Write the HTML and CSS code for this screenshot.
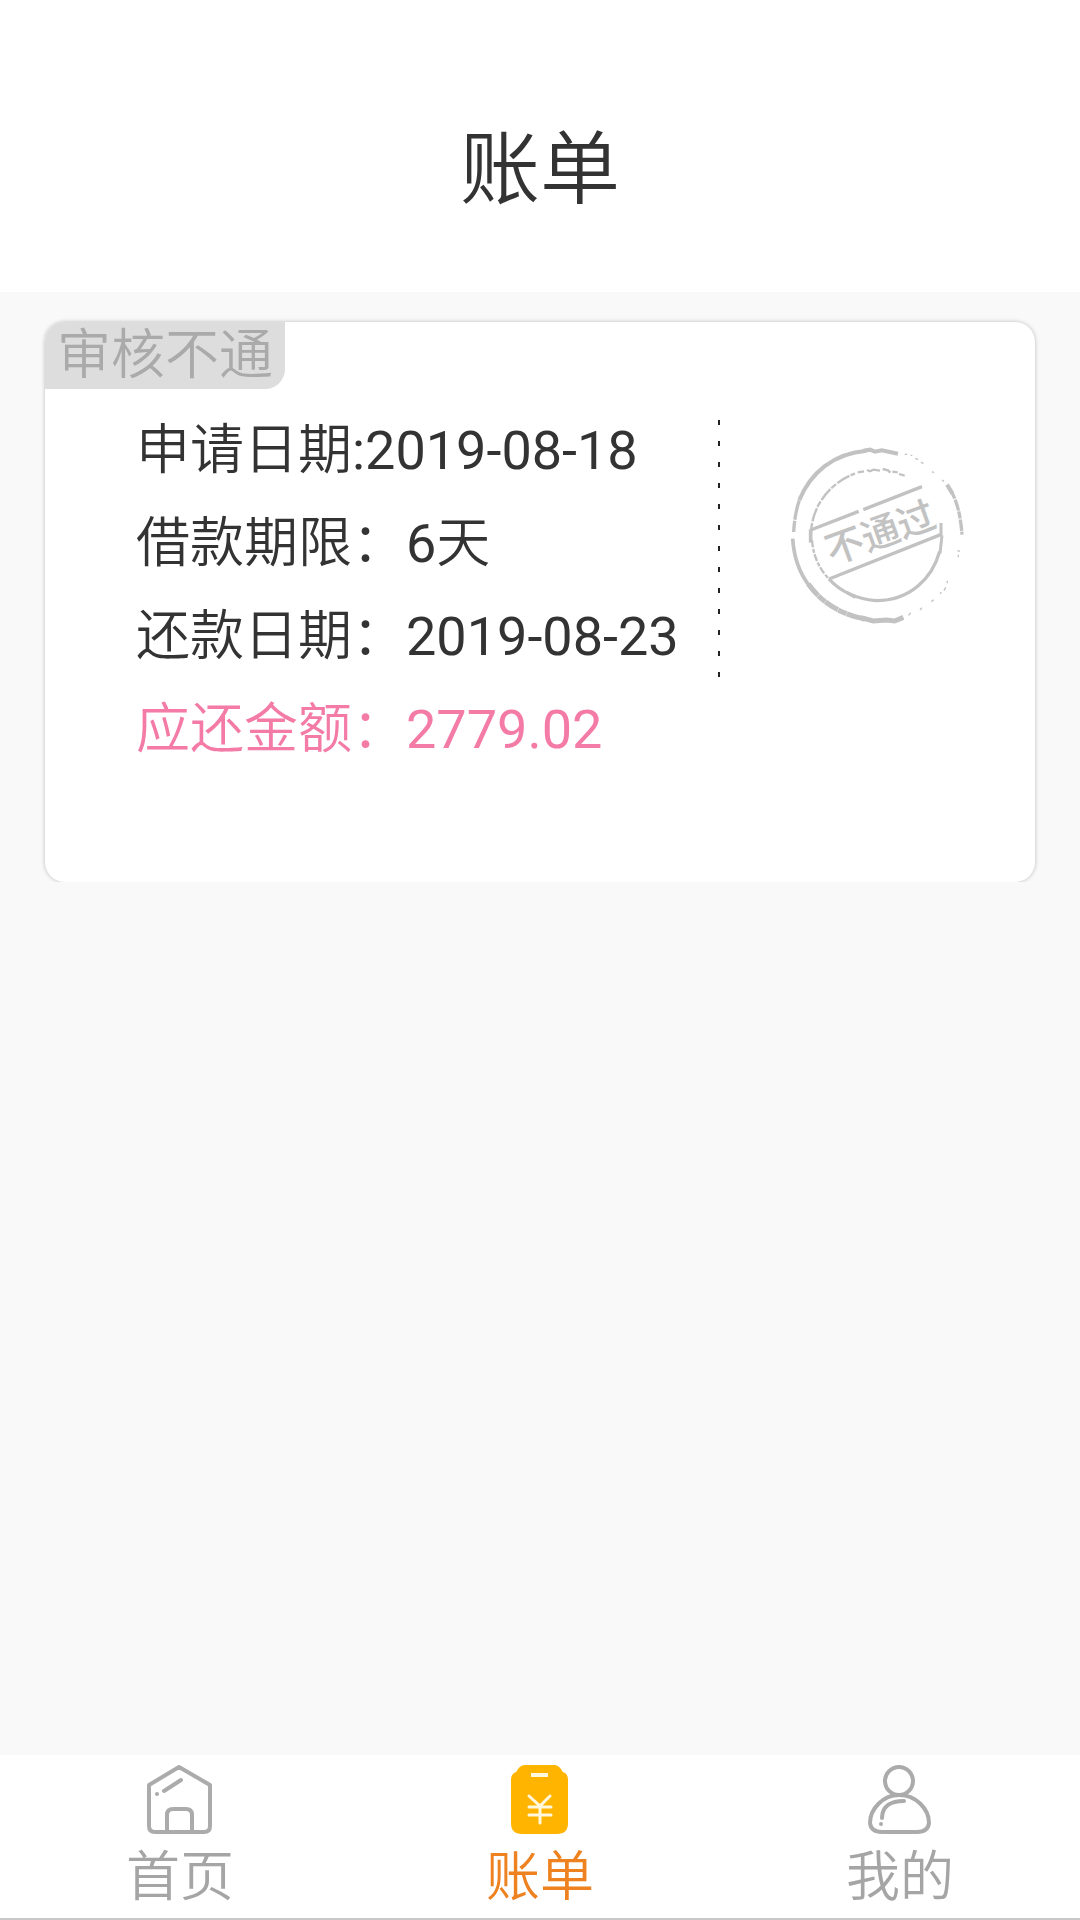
FILE: index.html
```html
<!DOCTYPE html>
<html lang="zh-CN">
<head>
<meta charset="utf-8">
<meta name="viewport" content="width=device-width, initial-scale=1">
<title>账单</title>
<link rel="stylesheet" href="styles.css">
</head>
<body>
<header class="header"><h1 class="title">账单</h1></header>
<main class="content">
  <article class="card">
    <span class="tag">审核不通</span>
    <div class="card-body">
      <div class="details">
        <p class="row">申请日期<span class="value">:2019-08-18</span></p>
        <p class="row">借款期限：<span class="value">6</span>天</p>
        <p class="row">还款日期：<span class="value">2019-08-23</span></p>
        <p class="row row-amount">应还金额：<span class="value">2779.02</span></p>
      </div>
      <div class="divider"></div>
      <svg class="stamp" viewBox="0 0 660 630" role="img" aria-label="不通过">
        <g fill="none" stroke="#c2c2c2" stroke-linecap="butt">
          <path d="M71 306C73 270 79 232 92 200" stroke-width="10" stroke-dasharray="34 3 60 2"/>
          <path d="M88 210C122 128 190 70 290 62" stroke-width="12"/>
          <path d="M280 62L300 59L315 65L335 61L384 71" stroke-width="12"/>
          <path d="M404 73H412M422 76H427M436 85L444 89M453 96L460 101M486 125L492 128M516 150L522 154" stroke-width="4"/>
          <path d="M531 164L547 190" stroke-width="12"/>
          <path d="M545 186C562 218 572 258 576 314" stroke-width="10" stroke-dasharray="22 3 35 2"/>
          <path d="M562 362L570 364M565 374V382M532 452V460M527 472L522 482M514 486L510 492M491 509L484 515M456 533L450 540M422 548L416 556" stroke-width="4"/>
          <path d="M68 326C72 388 88 430 120 470" stroke-width="11"/>
          <path d="M115 462C155 518 210 552 285 567" stroke-width="15" stroke-dasharray="45 1 27 1"/>
          <path d="M272 563L310 573L350 570L374 573L400 562" stroke-width="15"/>
          <path d="M124 298C128 232 177 158 255 131" stroke-width="7" stroke-dasharray="19 5 42 4"/>
          <path d="M263 127L282 124M291 120L300 124L310 119L330 122M338 117L354 121L361 128M367 125L383 127M387 132L404 137" stroke-width="7"/>
          <path d="M122 298V338" stroke-width="11"/>
          <path d="M126 330C130 378 146 414 177 447" stroke-width="7" stroke-dasharray="22 5 12 4"/>
          <path d="M177 447C205 478 246 505 318 512C421 512 487 444 509 364" stroke-width="10"/>
          <path d="M230 487L256 502M510 370L516 316M513 316V279" stroke-width="9"/>
          <path d="M122 300L266 244M280 239L456 170M177 447L512 314" stroke-width="10"/>
        </g>
        <text class="stamp-text" x="330" y="305" dy="44" text-anchor="middle" transform="rotate(-20 330 305)">不通过</text>
      </svg>
    </div>
  </article>
</main>
<nav class="tabbar">
  <a class="tab" href="#home">
    <svg class="tab-icon" viewBox="0 0 72 72" fill="none" stroke="#ababab" stroke-width="4" stroke-linecap="round" stroke-linejoin="round" aria-hidden="true">
      <path d="M5 22L35 4L66 22V63Q66 69 60 69H11Q5 69 5 63ZM23 68V52Q23 46 29 46H42Q48 46 48 52V68M20 28L37 17"/><circle cx="13" cy="31" r="2" fill="#ababab" stroke="none"/>
    </svg>
    <span>首页</span>
  </a>
  <a class="tab tab-active" href="#bills" aria-current="page">
    <svg class="tab-icon" viewBox="0 0 72 72" fill="none" stroke-linecap="round" aria-hidden="true">
      <path fill="#ffb400" d="M21 2H50Q54 2 57 6Q58 9 61 10Q64 12 64 17V60Q64 71 53 71H18Q7 71 7 60V17Q7 12 10 10Q13 9 14 6Q17 2 21 2Z"/>
      <path stroke="#fff8df" stroke-width="4" stroke-linecap="butt" d="M27 12H44"/>
      <path stroke="#fff8df" stroke-width="3" d="M25 33L36 43L46 33M25 44H47M25 52H47M36 43V60"/>
    </svg>
    <span>账单</span>
  </a>
  <a class="tab" href="#mine">
    <svg class="tab-icon" viewBox="0 0 72 72" fill="none" stroke="#ababab" stroke-width="4" stroke-linecap="round" aria-hidden="true">
      <circle cx="35" cy="18" r="14"/>
      <path d="M35 32C19 32 6 46 6 60Q7 69 18 69H53Q64 69 65 60C65 46 52 32 35 32ZM18 55C18 43 27 38 40 38"/><circle cx="17" cy="61" r="2" fill="#ababab" stroke="none"/>
    </svg>
    <span>我的</span>
  </a>
</nav>
</body>
</html>
```
FILE: styles.css
```css
* { box-sizing: border-box; }

body {
  margin: 0;
  min-height: 100vh;
  display: flex;
  flex-direction: column;
  background: #f9f9f9;
  color: #333;
  font-family: Roboto, "Noto Sans CJK SC", sans-serif;
  font-size: 54px;
  font-weight: 350;
}

.header {
  padding: 110px 44px 62px;
  background: #fff;
  text-align: center;
}

.title {
  margin: 0;
  font-size: 80px;
  line-height: 120px;
  font-weight: 350;
}

.content { flex: 1; }

.card {
  margin: 30px 45px 0;
  background: #fff;
  border-radius: 20px;
  box-shadow: 0 0 4px rgba(0, 0, 0, 0.25);
  clip-path: inset(-6px -6px 0 -6px);
}

.tag {
  display: block;
  width: fit-content;
  padding: 0 12px;
  border-radius: 20px 0;
  background: #ddd;
  color: #aaa;
  line-height: 67px;
}

.card-body {
  display: flex;
  align-items: flex-start;
  padding: 15px 45px 106px 91px;
}

.details { flex: 1; }

.row {
  margin: 0;
  line-height: 93px;
  white-space: nowrap;
}

.row-amount { color: #f37ba6; }

.value { font-weight: 400; }

.divider {
  width: 2px;
  height: 258px;
  margin: 16px 50px 0 0;
  background: repeating-linear-gradient(#222 0 5px, transparent 5px 21px);
}

.stamp {
  width: 220px;
  height: 210px;
  margin-top: 26px;
}

.stamp-text {
  fill: #c2c2c2;
  font-size: 114px;
  font-weight: 500;
}

.tabbar {
  display: flex;
  background: #fff;
  border-bottom: 2px solid #c8c8c8;
}

.tab {
  flex: 1;
  display: flex;
  flex-direction: column;
  align-items: center;
  gap: 2px;
  padding: 8px 0 0;
  color: #a5a5a5;
  line-height: 81px;
  text-decoration: none;
}

.tab-active { color: #ef8220; }

.tab-icon {
  width: 72px;
  height: 72px;
}
```
